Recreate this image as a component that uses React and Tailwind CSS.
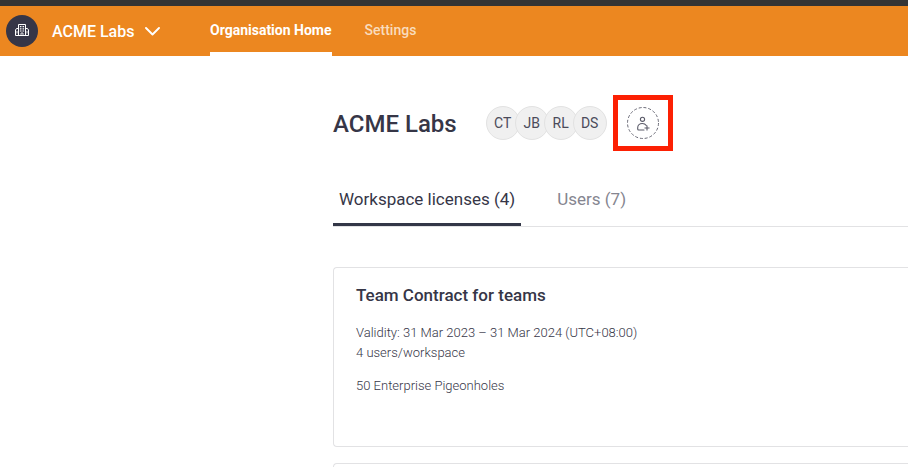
const navItems = [
  { label: 'Organisation Home', active: true },
  { label: 'Settings', active: false },
]

const members = ['CT', 'JB', 'RL', 'DS']

const tabs = [
  { label: 'Workspace licenses (4)', active: true },
  { label: 'Users (7)', active: false },
]

function BuildingIcon() {
  return (
    <svg className="h-4 w-4" viewBox="0 0 16 16" fill="none" stroke="#fff" aria-hidden="true">
      <path d="M4.5 12.5V1.5h7v11" />
      <path d="M4.5 5.5h-2L1.5 7v5.5h13V7l-1-1.5h-2" />
      <path d="M6.5 3v6.5M9.5 3v6.5" strokeWidth="1.2" strokeDasharray="1.2 1" />
      <path d="M8 3v6.5" strokeWidth="0.8" strokeDasharray="1.2 1" />
      <path d="M7 12v-2h2v2M3 8v2.5M13 8v2.5" strokeWidth="0.8" />
    </svg>
  )
}

function ChevronIcon() {
  return (
    <svg className="h-4 w-4" viewBox="0 0 16 16" fill="none" stroke="currentColor" strokeWidth="1.9" aria-hidden="true">
      <path d="M2 5 8.5 11.5 15 5" strokeLinecap="round" strokeLinejoin="round" />
    </svg>
  )
}

function AddUserIcon() {
  return (
    <svg className="h-8 w-8" viewBox="0 0 32 32" fill="none" stroke="#5a5a68" aria-hidden="true">
      <circle cx="16" cy="16" r="15.5" strokeWidth="0.9" strokeDasharray="3 1.87" />
      <circle cx="15.5" cy="12.3" r="2.1" strokeWidth="1.1" />
      <path
        d="M17 23h-5.3a1 1 0 0 1-1-1v-1.2c0-2.4 2-4.3 4.6-4.3 1.7 0 3.2.8 4 2"
        strokeWidth="1.1"
        strokeLinecap="round"
      />
      <path d="M20 18.5v5M17.5 21h5" strokeWidth="1.1" />
    </svg>
  )
}

function Header() {
  return (
    <header className="flex h-14 shrink-0 border-t-[6px] border-[#343434] bg-[#ec8720] pl-1.5 text-white">
      <button className="flex w-51 items-center text-left" type="button">
        <span className="flex h-8 w-8 items-center justify-center rounded-full bg-[#363647]">
          <BuildingIcon />
        </span>
        <span className="mr-2.5 ml-3.5 pt-0.5 text-base font-medium">ACME Labs</span>
        <ChevronIcon />
      </button>
      <nav className="flex gap-[33px]">
        {navItems.map((item) => (
          <a
            className={
              item.active
                ? 'flex items-center border-b-4 border-white pt-0.5 text-sm font-bold'
                : 'flex items-center border-b-4 border-transparent pt-0.5 text-sm font-medium text-[#f9dcbd]'
            }
            href="#"
            key={item.label}
          >
            {item.label}
          </a>
        ))}
      </nav>
    </header>
  )
}

function LicenseCard({ title, validity, users, quota }) {
  return (
    <section className="h-45 rounded-l border border-r-0 border-[#e2e2e4] px-[22px] py-[15px]">
      <h2 className="text-[17px] leading-6 font-medium">{title}</h2>
      <div className="mt-4 text-[13px] leading-5 font-light">
        <p>{validity}</p>
        <p>{users}</p>
        <p className="mt-[13px]">{quota}</p>
      </div>
    </section>
  )
}

export default function App() {
  return (
    <div className="flex h-screen flex-col overflow-hidden bg-white font-['Roboto',sans-serif] text-[#363647]">
      <Header />
      <main className="pt-[39px] pl-[333px]">
        <div className="flex items-center">
          <h1 className="pt-0.5 text-2xl font-medium">ACME Labs</h1>
          <ul className="ml-[29px] flex -space-x-[5px]">
            {members.map((initials) => (
              <li
                className="flex h-[34px] w-[34px] items-center justify-center rounded-full border border-[#e2e2e2] bg-[#f0f0f0] text-sm text-[#4b4b5a]"
                key={initials}
              >
                {initials}
              </li>
            ))}
          </ul>
          <div className="ml-1.5 flex h-14 w-15 items-center justify-center border-5 border-[#fc2003]">
            <button className="rounded-full" type="button" aria-label="Add user">
              <AddUserIcon />
            </button>
          </div>
        </div>

        <div className="mt-5 flex gap-[30px] border-b border-[#e2e2e4]" role="tablist">
          {tabs.map((tab) => (
            <button
              aria-selected={tab.active}
              className={
                tab.active
                  ? 'border-b-3 border-[#333747] px-1.5 pt-4 pb-3 text-[17px] leading-6'
                  : 'border-b-3 border-transparent px-1.5 pt-4 pb-3 text-[17px] leading-6 text-[#858590]'
              }
              key={tab.label}
              role="tab"
              type="button"
            >
              {tab.label}
            </button>
          ))}
        </div>

        <div className="mt-10 flex flex-col gap-4">
          <LicenseCard
            title="Team Contract for teams"
            validity="Validity: 31 Mar 2023 – 31 Mar 2024 (UTC+08:00)"
            users="4 users/workspace"
            quota="50 Enterprise Pigeonholes"
          />
          <LicenseCard />
        </div>
      </main>
    </div>
  )
}
